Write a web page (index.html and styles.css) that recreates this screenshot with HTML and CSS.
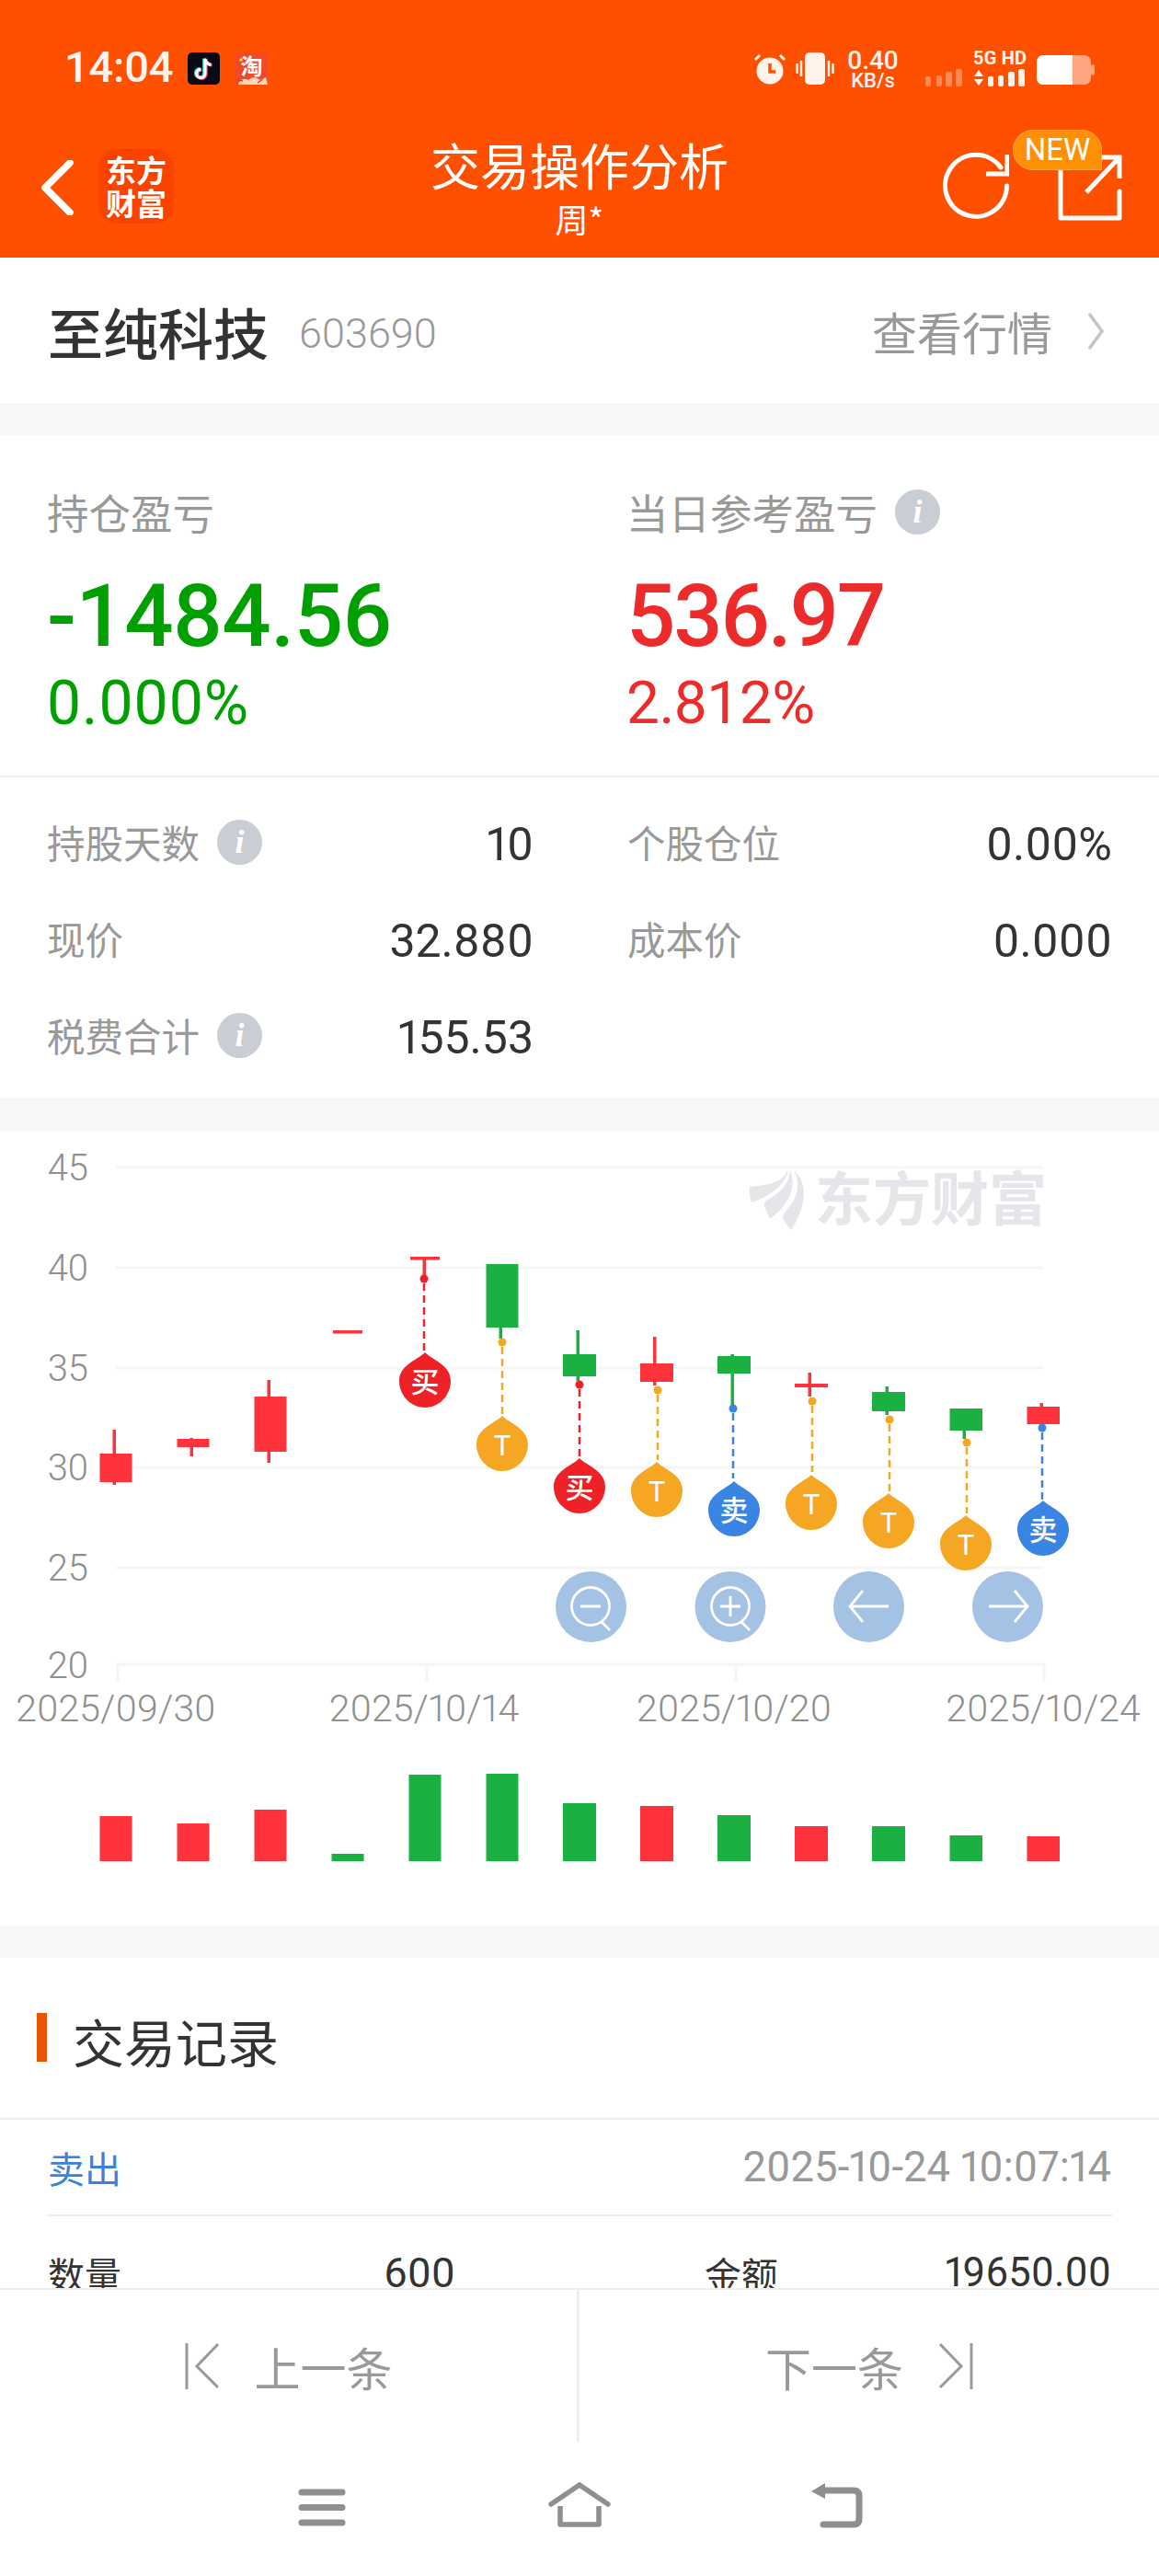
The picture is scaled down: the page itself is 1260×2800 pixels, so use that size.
FILE: index.html
```html
<!DOCTYPE html>
<html lang="zh-CN">
<head>
<meta charset="utf-8">
<title>交易操作分析</title>
<link rel="stylesheet" href="styles.css">
</head>
<body>
<div class="app">
  <header class="header">
    <div class="status">
      <div class="status-left">
        <span class="time">14:04</span>
        <svg class="app-icon tiktok" viewBox="0 0 35 35"><rect width="35" height="35" rx="5" fill="#0a0a14"/><path d="M19 7v16a4.600 4.600 0 1 1-4.600-4.600M19 7c.6 3.600 3 6 6.500 6.400" fill="none" stroke="#2fe0e8" stroke-width="3.600" transform="translate(-1 -.6)"/><path d="M19 7v16a4.600 4.600 0 1 1-4.600-4.600M19 7c.6 3.600 3 6 6.500 6.400" fill="none" stroke="#f0305a" stroke-width="3.600" transform="translate(1 .6)"/><path d="M19 7v16a4.600 4.600 0 1 1-4.600-4.600M19 7c.6 3.600 3 6 6.500 6.400" fill="none" stroke="#fff" stroke-width="3.200"/></svg>
        <svg class="app-icon taobao" viewBox="0 0 35 35"><rect width="35" height="35" rx="5" fill="#ee4a2a"/><text class="taobao-text" x="17.500" y="24">淘</text><path d="M3 35C4 29 10 28 14 30C18 26 24 27 26 30L33 27L35 35Z" fill="#f6d9b8"/><path d="M3 30l5 1M24 33l6-4" stroke="#d8402a" stroke-width="1.500"/><circle cx="6" cy="8" r="1.800" fill="#ffd23c"/></svg>
      </div>
      <div class="status-right">
        <svg class="st-alarm" viewBox="0 0 34 34"><circle cx="17" cy="19" r="14.500" fill="#fff3ec"/><path d="M17 11v9h6" fill="none" stroke="#ff5000" stroke-width="3.500"/><path d="M1 7l5-5M33 7l-5-5" stroke="#fff3ec" stroke-width="3"/></svg>
        <svg class="st-vib" viewBox="0 0 42 35"><rect x="10" width="22" height="35" rx="5" fill="#fff3ec"/><path d="M1.500 12v11M6 9v17M36 9v17M40.500 12v11" stroke="#fff3ec" stroke-width="2.500"/></svg>
        <div class="speed"><span class="speed-num">0.40</span><span class="speed-unit">KB/s</span></div>
        <svg class="st-sig1" viewBox="0 0 40 19"><g fill="#ff8a55"><rect y="8" width="6" height="11" rx="2"/><rect x="12" y="7" width="6" height="12" rx="2"/><rect x="22" y="3" width="7" height="16" rx="2"/><rect x="33" width="7" height="19" rx="2"/></g></svg>
        <div class="sig2">
          <span class="sig-label">5G HD</span>
          <svg class="st-sig2" viewBox="0 0 56 19"><g fill="#fff3ec"><path d="M1 8L6 1l5 7zM1 11h10l-5 7z"/><rect x="16" y="8" width="6" height="11" rx="2"/><rect x="27" y="7" width="6" height="12" rx="2"/><rect x="38" y="3" width="7" height="16" rx="2"/><rect x="49" width="7" height="19" rx="2"/></g></svg>
        </div>
        <svg class="st-batt" viewBox="0 0 63 32"><rect width="59" height="32" rx="7" fill="#ffa680"/><path d="M7 0h32v32H7a7 7 0 0 1-7-7V7a7 7 0 0 1 7-7z" fill="#fff"/><rect x="59" y="10" width="4" height="12" rx="2" fill="#ffa680"/></svg>
      </div>
    </div>
    <div class="nav">
      <div class="nav-left">
        <svg class="back" viewBox="0 0 35 60"><path d="M31 3L4 30l27 27" fill="none" stroke="#fff" stroke-width="7.500" stroke-linecap="round" stroke-linejoin="round"/></svg>
        <div class="logo"><span>东方</span><span>财富</span></div>
      </div>
      <div class="nav-title">
        <div class="title">交易操作分析</div>
        <div class="subtitle">周*</div>
      </div>
      <div class="nav-right">
        <svg class="refresh" viewBox="0 0 74 74"><path d="M65 17A33.500 33.500 0 1 0 71.500 37" fill="none" stroke="#fff" stroke-width="5" stroke-linecap="round"/><path d="M49 24H72V3" fill="none" stroke="#fff" stroke-width="5"/></svg>
        <div class="share-wrap">
          <svg class="share" viewBox="0 0 74 74"><path d="M7 18V71H71V42" fill="none" stroke="#fff" stroke-width="5" stroke-linejoin="round" stroke-linecap="round"/><path d="M35 43L71 5M50 5H71V28" fill="none" stroke="#fff" stroke-width="5"/></svg>
          <span class="badge">NEW</span>
        </div>
      </div>
    </div>
  </header>

  <main class="scroll">
    <section class="stock">
      <div class="stock-name"><span class="name">至纯科技</span><span class="code">603690</span></div>
      <div class="stock-link"><span>查看行情</span><svg class="chev" viewBox="0 0 18 40"><path d="M2 1l14 19L2 39" fill="none" stroke="#c4c4c4" stroke-width="3.500"/></svg></div>
    </section>

    <section class="summary band-top">
      <div class="pl-grid">
        <div class="pl">
          <div class="pl-label"><span>持仓盈亏</span></div>
          <div class="pl-big green">-1484.56</div>
          <div class="pl-pct green">0.000%</div>
        </div>
        <div class="pl">
          <div class="pl-label"><span>当日参考盈亏</span><i class="info">i</i></div>
          <div class="pl-big red">536.97</div>
          <div class="pl-pct red">2.812%</div>
        </div>
      </div>
      <div class="stats">
        <div class="stat"><span class="stat-label">持股天数<i class="info">i</i></span><span class="stat-val">10</span></div>
        <div class="stat"><span class="stat-label">个股仓位</span><span class="stat-val">0.00%</span></div>
        <div class="stat"><span class="stat-label">现价</span><span class="stat-val">32.880</span></div>
        <div class="stat"><span class="stat-label">成本价</span><span class="stat-val">0.000</span></div>
        <div class="stat"><span class="stat-label">税费合计<i class="info">i</i></span><span class="stat-val">155.53</span></div>
      </div>
    </section>

    <section class="chart band-top">
      <svg class="chart-svg" viewBox="0 1229 1260 864">
        <defs>
          <path id="drop" d="M0 0C6 7 28 13 28 31C28 47 15 60 0 60C-15 60-28 47-28 31C-28 13-6 7 0 0Z"/>
        </defs>
        <g class="grid">
          <path d="M126 1269H1134M126 1378H1134M126 1487H1134M126 1595H1134M126 1704H1134M126 1809H1136M128 1809V1827M464 1809V1827M800 1809V1827M1135 1809V1827"/>
        </g>
        <g class="axis-y">
          <text x="96" y="1283">45</text><text x="96" y="1392">40</text><text x="96" y="1501">35</text><text x="96" y="1609">30</text><text x="96" y="1718">25</text><text x="96" y="1824">20</text>
        </g>
        <g class="axis-x">
          <text x="126" y="1871">2025/09/30</text><text x="461" y="1871">2025/10/14</text><text x="798" y="1871">2025/10/20</text><text x="1134" y="1871">2025/10/24</text>
        </g>

        <g class="wm">
          <path d="M855 1273C852 1285 835 1288 815 1290Q814 1298 817 1307C835 1301 852 1290 857 1273Z"/>
          <path d="M859 1272C858 1287 848 1297 833 1305Q830 1307 831 1311L837 1325C852 1314 868 1295 859 1272Z"/>
          <path d="M863 1272C878 1285 878 1310 860 1337L851 1325C851 1320 853 1318 856 1314C868 1302 870 1285 863 1272Z"/>
          <text x="886" y="1326">东方财富</text>
        </g>

        <g class="up">
          <rect x="122.500" y="1554" width="3.500" height="60"/><rect x="108.500" y="1580" width="35" height="31"/>
          <rect x="206.500" y="1563" width="3.500" height="20"/><rect x="192.500" y="1564" width="35" height="9"/>
          <rect x="290.500" y="1500" width="3.500" height="90"/><rect x="276.500" y="1518" width="35" height="60"/>
          <rect x="362" y="1446" width="32" height="3.500"/>
          <rect x="446" y="1366" width="32" height="3.500"/><rect x="459.500" y="1366" width="3.500" height="24"/>
          <rect x="710" y="1453" width="3.500" height="53"/><rect x="696" y="1482" width="36" height="20"/>
          <rect x="878.500" y="1492" width="3.500" height="26"/><rect x="864" y="1504" width="36" height="4"/>
          <rect x="1130.500" y="1525" width="3.500" height="25"/><rect x="1116.500" y="1529" width="35.500" height="19"/>
        </g>
        <g class="down">
          <rect x="528.500" y="1374" width="35" height="69"/><rect x="542.500" y="1443" width="3.500" height="12"/>
          <rect x="626.500" y="1446" width="3.500" height="55"/><rect x="612" y="1472" width="36" height="24"/>
          <rect x="794.500" y="1472" width="3.500" height="56"/><rect x="780" y="1474" width="36" height="19"/>
          <rect x="962.500" y="1507" width="3.500" height="31"/><rect x="948" y="1513" width="36" height="21"/>
          <rect x="1046.500" y="1555" width="3.500" height="9"/><rect x="1032.500" y="1531" width="35.500" height="24"/>
        </g>

        <g class="lead buy"><path d="M461 1395V1468M630 1510V1584"/></g>
        <g class="lead tee"><path d="M546 1464V1537M715 1516V1587M883 1528V1600M967 1548V1622M1051 1573V1645"/></g>
        <g class="lead sell"><path d="M797 1536V1607M1133 1557V1630"/></g>

        <g class="buy-fill">
          <circle cx="461" cy="1390" r="4.500"/><circle cx="630" cy="1505" r="4.500"/>
          <use href="#drop" x="462" y="1470"/><use href="#drop" x="630" y="1585"/>
        </g>
        <g class="tee-fill">
          <circle cx="546" cy="1459" r="4.500"/><circle cx="715" cy="1511" r="4.500"/><circle cx="883" cy="1523" r="4.500"/><circle cx="967" cy="1543" r="4.500"/><circle cx="1051" cy="1568" r="4.500"/>
          <use href="#drop" x="546" y="1539"/><use href="#drop" x="714" y="1589"/><use href="#drop" x="882" y="1603"/><use href="#drop" x="966" y="1623"/><use href="#drop" x="1050" y="1647"/>
        </g>
        <g class="sell-fill">
          <circle cx="797" cy="1531" r="4.500"/><circle cx="1133" cy="1552" r="4.500"/>
          <use href="#drop" x="798" y="1610"/><use href="#drop" x="1134" y="1631"/>
        </g>
        <g class="drop-cjk">
          <text x="462" y="1513">买</text><text x="630" y="1628">买</text><text x="798" y="1653">卖</text><text x="1134" y="1674">卖</text>
        </g>
        <g class="drop-t">
          <text x="546" y="1582">T</text><text x="714" y="1632">T</text><text x="882" y="1646">T</text><text x="966" y="1666">T</text><text x="1050" y="1690">T</text>
        </g>

        <g class="btn-bg">
          <circle cx="642.500" cy="1746.500" r="38.500"/><circle cx="794" cy="1746.500" r="38.500"/><circle cx="944.500" cy="1746.500" r="38.500"/><circle cx="1095.500" cy="1746.500" r="38.500"/>
        </g>
        <g class="btn-icon">
          <circle cx="642" cy="1746" r="20.500"/><path d="M654 1763L663 1772M631 1746H653"/>
          <circle cx="794" cy="1746" r="20.500"/><path d="M806 1763L815 1772M783 1746H805M794 1735V1757"/>
          <path d="M966 1746H924M938 1729L924 1746L938 1763"/>
          <path d="M1075 1746H1117M1103 1729L1117 1746L1103 1763"/>
        </g>

        <g class="up">
          <rect x="108.500" y="1974" width="35" height="49"/><rect x="192.500" y="1982" width="35" height="41"/><rect x="276.500" y="1967" width="35" height="56"/>
          <rect x="696" y="1963" width="36" height="60"/><rect x="864" y="1985" width="36" height="38"/><rect x="1116.500" y="1996" width="35.500" height="27"/>
        </g>
        <g class="down">
          <rect x="360.500" y="2015" width="35" height="8"/><rect x="444.500" y="1929" width="35" height="94"/><rect x="528.500" y="1928" width="35" height="95"/>
          <rect x="612" y="1960" width="36" height="63"/><rect x="780" y="1973" width="36" height="50"/><rect x="948" y="1985" width="36" height="38"/><rect x="1032.500" y="1995" width="35.500" height="28"/>
        </g>
      </svg>
    </section>

    <section class="records band-top">
      <h2 class="rec-title">交易记录</h2>
      <div class="rec-head"><span class="rec-type">卖出</span><span class="rec-time">2025-10-24 10:07:14</span></div>
      <div class="rec-grid">
        <div class="rec-cell"><span>数量</span><span class="rec-num">600</span></div>
        <div class="rec-cell"><span>金额</span><span class="rec-num amount">19650.00</span></div>
      </div>
    </section>
  </main>

  <footer class="footer">
    <div class="pager">
      <div class="pager-btn prev">
        <svg class="pg-icon" viewBox="0 0 38 50"><path d="M2 0V50M36 1L13 25L36 48" fill="none" stroke="#999" stroke-width="3"/></svg>
        <span>上一条</span>
      </div>
      <div class="pager-btn next">
        <span>下一条</span>
        <svg class="pg-icon" viewBox="0 0 38 50"><path d="M36 0V50M2 1L25 25L2 48" fill="none" stroke="#999" stroke-width="3"/></svg>
      </div>
    </div>
    <div class="sysnav">
      <svg class="sys-menu" viewBox="0 0 52 41"><path d="M4 4H48M4 20.500H48M4 37H48" fill="none" stroke="#8f8f8f" stroke-width="7" stroke-linecap="round"/></svg>
      <svg class="sys-home" viewBox="0 0 68 50"><path d="M3 24L34 3L65 24" fill="none" stroke="#8f8f8f" stroke-width="5.500" stroke-linecap="round"/><path d="M13 26V46H55V26" fill="none" stroke="#8f8f8f" stroke-width="5.500" stroke-linejoin="round"/></svg>
      <svg class="sys-back" viewBox="0 0 58 50"><path d="M12 9H47Q53 9 53 15V40Q53 46 47 46H14" fill="none" stroke="#8f8f8f" stroke-width="7" stroke-linecap="round"/><path d="M1 10L16 1V18Z" fill="#8f8f8f"/></svg>
    </div>
  </footer>
</div>
</body>
</html>
```
FILE: styles.css
```css
* { box-sizing: border-box; margin: 0; padding: 0; }
html, body { width: 1260px; height: 2800px; overflow: hidden; background: #fff; }
body { font-family: Roboto, "Noto Sans CJK SC", sans-serif; color: #333; }
.app { display: flex; flex-direction: column; height: 2800px; }

/* header */
.header { height: 280px; background: #ff5000; color: #fff; flex: none; }
.status { height: 140px; padding: 55px 70px 0 70px; display: flex; justify-content: space-between; align-items: flex-start; }
.status-left { display: flex; align-items: flex-start; }
.time { font-size: 47px; font-weight: 500; line-height: 36px; color: #fff3ec; width: 134px; letter-spacing: -.2px; white-space: nowrap; }
.app-icon { width: 35px; height: 35px; margin-top: 2px; }
.taobao { margin-left: 17px; }
.taobao-text { font-family: "Noto Sans CJK SC", sans-serif; font-weight: 700; font-size: 24px; fill: #fff; text-anchor: middle; }
.status-right { display: flex; align-items: flex-start; }
.st-alarm { width: 34px; height: 34px; margin-top: 3px; }
.st-vib { width: 42px; height: 35px; margin: 2px 0 0 11px; }
.speed { width: 56px; margin-left: 14px; display: flex; flex-direction: column; align-items: center; color: #fff3ec; font-weight: 500; }
.speed-num { font-size: 28px; line-height: 22px; }
.speed-unit { font-size: 22px; line-height: 20px; margin-top: 1px; }
.st-sig1 { width: 40px; height: 19px; margin: 20px 0 0 29px; }
.sig2 { width: 57px; margin-left: 12px; display: flex; flex-direction: column; color: #fff3ec; }
.sig-label { font-size: 20px; font-weight: 700; line-height: 16px; white-space: nowrap; letter-spacing: .2px; }
.st-sig2 { width: 56px; height: 19px; margin-top: 4px; }
.st-batt { width: 63px; height: 32px; margin: 5px 0 0 12px; }

.nav { height: 140px; display: grid; grid-template-columns: 1fr auto 1fr; padding: 0 40px; }
.nav-left { display: flex; align-items: flex-start; }
.back { width: 35px; height: 60px; margin: 34px 0 0 5px; }
.logo { width: 82px; height: 81px; margin: 22px 0 0 27px; background: #fb4300; border-radius: 20px; display: flex; flex-direction: column; align-items: center; padding-top: 4px; font: 700 33px/36px "Noto Sans CJK SC", sans-serif; }
.nav-title { text-align: center; font-family: "Noto Sans CJK SC", sans-serif; }
.title { font-size: 54px; line-height: 60px; margin-top: 9px; }
.subtitle { font-size: 36px; line-height: 44px; margin-top: 6px; }
.nav-right { display: flex; justify-content: flex-end; align-items: flex-start; }
.refresh { width: 74px; height: 74px; margin: 25px 49px 0 0; }
.share-wrap { position: relative; width: 74px; height: 74px; margin-top: 26px; }
.share { width: 74px; height: 74px; }
.badge { position: absolute; left: -45px; top: -25px; width: 97px; height: 44px; background: #ff8f05; border: 1px solid #ffa64d; border-radius: 22px 22px 0 22px; font-size: 33px; line-height: 42px; text-align: center; color: #fff; }

/* scroll body */
.scroll { flex: 1; min-height: 0; overflow: hidden; }
.band-top { border-top: 36px solid #f7f7f7; }
.stock { height: 158px; display: flex; justify-content: space-between; align-items: center; padding: 2px 60px 0 52px; }
.stock-name { display: flex; align-items: center; }
.name { font: 500 60px/70px "Noto Sans CJK SC", sans-serif; color: #333; }
.code { font-size: 45px; font-weight: 300; color: #999; margin: 4px 0 0 33px; }
.stock-link { display: flex; align-items: center; font: 400 49px/60px "Noto Sans CJK SC", sans-serif; color: #999; }
.chev { width: 18px; height: 40px; margin-left: 38px; }

.summary { height: 755px; border-top-width: 35px; }
.pl-grid { height: 372px; display: grid; grid-template-columns: 630px 1fr; padding: 0 51px; border-bottom: 2px solid #eee; }
.pl { padding-top: 59px; }
.pl-label { display: flex; align-items: center; height: 48px; font: 400 45.500px/48px "Noto Sans CJK SC", sans-serif; color: #999; }
.pl-big { font-size: 94px; font-weight: 500; line-height: 100px; margin-top: 40px; letter-spacing: -.5px; }
.pl-big.red { letter-spacing: -2.200px; }
.pl-pct { font-size: 66px; line-height: 70px; margin-top: 10px; letter-spacing: 1px; }
.pl-pct.red { font-size: 64px; letter-spacing: -.5px; }
.green { color: #00a000; }
.red { color: #ee2b2b; }
.info { display: inline-block; flex: none; width: 49px; height: 49px; margin-left: 19px; border-radius: 50%; background: #c9cdd4; color: #fff; font: italic 700 36px/49px "Liberation Serif", serif; text-align: center; vertical-align: middle; }
.stats { display: grid; grid-template-columns: 529px 527px; column-gap: 102px; padding: 47px 51px 0; grid-auto-rows: 105px; }
.stat { display: flex; justify-content: space-between; align-items: flex-start; }
.stat-label { display: flex; align-items: center; height: 50px; margin-top: -2px; font: 400 41.500px/50px "Noto Sans CJK SC", sans-serif; color: #999; }
.stat-val { font-size: 50px; line-height: 50px; margin-top: 1px; color: #333; font-feature-settings: "pnum"; }

.chart { height: 900px; }
.chart-svg { display: block; width: 1260px; height: 864px; }
.grid path { fill: none; stroke: #f5f5f5; stroke-width: 3; }
.axis-y text { font-size: 40px; fill: #8f8f8f; text-anchor: end; font-weight: 300; }
.axis-x text { font-size: 41px; fill: #8f8f8f; text-anchor: middle; font-weight: 300; font-feature-settings: "pnum"; }
.wm path { fill: #e6e6ea; }
.wm text { font-family: "Noto Sans CJK SC", sans-serif; font-weight: 700; font-size: 63px; fill: #e6e6ea; }
.up rect { fill: #fe333c; }
.down rect { fill: #1ab142; }
.lead path { fill: none; stroke-width: 2.500; stroke-dasharray: 8 5; }
.lead.buy path { stroke: #ee2127; }
.lead.tee path { stroke: #f5a623; }
.lead.sell path { stroke: #3a84e4; }
.buy-fill { fill: #ee2127; }
.tee-fill { fill: #f5a623; }
.sell-fill { fill: #3a84e4; }
.drop-cjk text { font-family: "Noto Sans CJK SC", sans-serif; font-weight: 500; font-size: 31px; fill: #fff; text-anchor: middle; }
.drop-t text { font-size: 31px; fill: #fff; text-anchor: middle; }
.btn-bg { fill: #a4c2e4; }
.btn-icon circle, .btn-icon path { fill: none; stroke: #fff; stroke-width: 2.800; }

.records { height: 400px; border-top-width: 35px; }
.rec-title { position: relative; height: 176px; padding: 40px 0 0 79px; font: 400 56px/100px "Noto Sans CJK SC", sans-serif; color: #333; border-bottom: 2px solid #eee; }
.rec-title::before { content: ""; position: absolute; left: 40px; top: 60px; width: 11px; height: 53px; background: #ea5504; }
.rec-head { height: 105px; margin: 0 50px; padding: 0 2px; display: flex; justify-content: space-between; align-items: center; border-bottom: 2px solid #eee; }
.rec-type { font: 400 40px/50px "Noto Sans CJK SC", sans-serif; color: #3a84d8; }
.rec-time { font-size: 45.500px; color: #999; font-feature-settings: "pnum"; }
.rec-grid { display: grid; grid-template-columns: 443px 442px; column-gap: 271px; padding: 36px 52px 0 52px; }
.rec-cell { display: flex; justify-content: space-between; font: 400 40px/52px "Noto Sans CJK SC", sans-serif; color: #333; }
.rec-num { font-family: Roboto, sans-serif; font-size: 45px; font-feature-settings: "pnum"; }
.rec-num.amount { font-size: 43.500px; }

/* footer */
.footer { height: 313px; flex: none; background: #fff; border-top: 2px solid #eee; }
.pager { height: 165px; display: grid; grid-template-columns: 1fr 1fr; }
.pager-btn { display: flex; align-items: center; justify-content: center; gap: 38px; font: 400 50px/60px "Noto Sans CJK SC", sans-serif; color: #999; }
.pager-btn.prev { border-right: 3px solid #eee; }
.pg-icon { width: 38px; height: 50px; }
.sysnav { position: relative; height: 146px; }
.sys-menu, .sys-home, .sys-back { position: absolute; }
.sys-menu { left: 324px; top: 51px; width: 52px; height: 41px; }
.sys-home { left: 596px; top: 44px; width: 68px; height: 50px; }
.sys-back { left: 881px; top: 44px; width: 58px; height: 50px; }
```
